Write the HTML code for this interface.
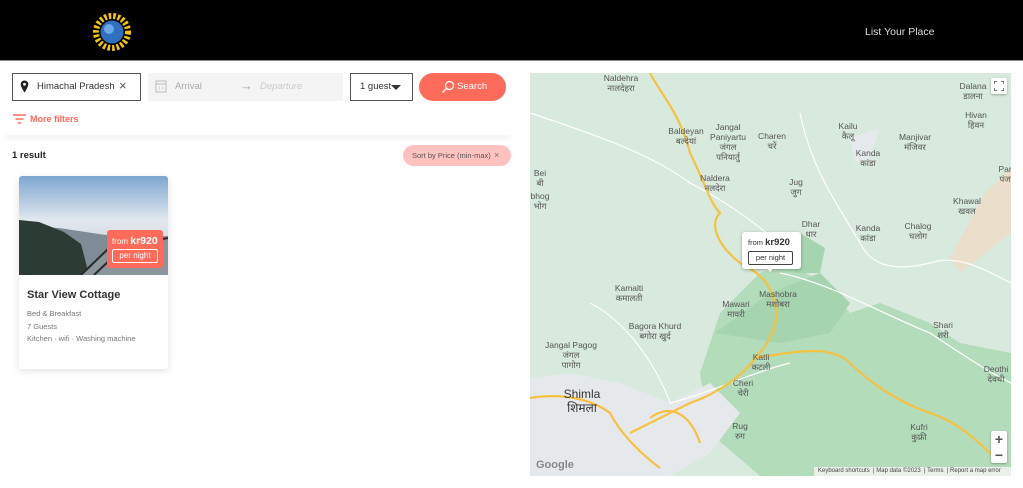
<!DOCTYPE html>
<html><head><meta charset="utf-8"><style>
*{box-sizing:border-box;margin:0;padding:0}
body{width:1023px;height:488px;overflow:hidden;background:#fff;font-family:"Liberation Sans",sans-serif;position:relative}
.abs{position:absolute}
.hdr{left:0;top:0;width:1023px;height:61px;background:#000;border-bottom:1px solid #888}
.lab{position:absolute;font-size:8.5px;color:#555;text-align:center;line-height:10px;transform:translateX(-50%);white-space:nowrap;font-family:"Liberation Sans","Noto Sans CJK SC",sans-serif}
</style></head><body>
<div class="abs hdr">
 <svg class="abs" style="left:92px;top:13px" width="40" height="38" viewBox="0 0 40 38">
  <circle cx="20" cy="19" r="16" fill="none" stroke="#f5c800" stroke-width="6" stroke-dasharray="2.5 2"/>
  <circle cx="20" cy="19" r="11.5" fill="#2e6fc0"/>
  <circle cx="17" cy="16" r="5" fill="#6aa8e8"/>
 </svg>
 <div class="abs" style="left:865px;top:26px;color:#ddd;font-size:10.5px">List Your Place</div>
</div>
<div class="abs" style="left:12px;top:73px;width:129px;height:28px;border:1px solid #555;"></div>
<svg class="abs" style="left:20px;top:80px" width="9" height="13" viewBox="0 0 9 13"><path d="M4.5 0.5C2.3 0.5 0.7 2.1 0.7 4.3 0.7 7.2 4.5 12.5 4.5 12.5S8.3 7.2 8.3 4.3C8.3 2.1 6.7 0.5 4.5 0.5Z" fill="#222"/><circle cx="4.5" cy="4.3" r="1.4" fill="#fff"/></svg>
<div class="abs" style="left:37px;top:81px;font-size:9.5px;color:#333">Himachal Pradesh</div>
<div class="abs" style="left:119px;top:78px;font-size:13px;color:#555">×</div>
<div class="abs" style="left:148px;top:73px;width:195px;height:28px;background:#f4f4f4"></div>
<svg class="abs" style="left:155px;top:79px" width="12" height="14"><rect x="1" y="2" width="10" height="11" fill="none" stroke="#bbb"/><path d="M1 5H11M4 8H5M7 8H8M4 10H5M7 10H8" stroke="#bbb"/></svg>
<div class="abs" style="left:175px;top:81px;font-size:9.5px;color:#aaa">Arrival</div>
<div class="abs" style="left:240px;top:78px;font-size:13px;color:#aaa">→</div>
<div class="abs" style="left:260px;top:81px;font-size:9.5px;color:#ccc;font-style:italic">Departure</div>
<div class="abs" style="left:350px;top:73px;width:63px;height:28px;border:1px solid #555"></div>
<div class="abs" style="left:360px;top:81px;font-size:9.5px;color:#333">1 guest</div>
<div class="abs" style="left:391px;top:85px;width:0;height:0;border-left:5px solid transparent;border-right:5px solid transparent;border-top:5px solid #333"></div>
<div class="abs" style="left:419px;top:73px;width:87px;height:28px;background:#ff6b5b;border-radius:14px"></div>
<svg class="abs" style="left:441px;top:80px" width="14" height="14"><circle cx="8.5" cy="5.5" r="4" fill="none" stroke="#fff" stroke-width="1.2"/><path d="M5.5 8.5L1.5 12.5" stroke="#fff" stroke-width="1.4"/></svg>
<div class="abs" style="left:457px;top:81px;font-size:9.5px;color:#fff">Search</div>
<svg class="abs" style="left:13px;top:114px" width="13" height="10"><path d="M0 1H13M2.5 5H10.5M5 9H8" stroke="#ff6b5b" stroke-width="1.4"/></svg>
<div class="abs" style="left:30px;top:114px;font-size:9px;color:#ff6b5b;font-weight:bold">More filters</div>
<div class="abs" style="left:5px;top:131px;width:505px;height:4px;box-shadow:0 3px 5px rgba(0,0,0,0.07)"></div>
<div class="abs" style="left:12px;top:150px;font-size:9.5px;color:#222;font-weight:bold">1 result</div>
<div class="abs" style="left:403px;top:145px;width:108px;height:21px;background:#ffc2be;border-radius:11px"></div>
<div class="abs" style="left:412px;top:151px;font-size:7.5px;color:#555">Sort by Price (min-max)</div>
<div class="abs" style="left:494px;top:150px;font-size:9px;color:#777">×</div>
<div class="abs" style="left:19px;top:176px;width:149px;height:193px;background:#fff;border-radius:3px;box-shadow:0 2px 8px rgba(0,0,0,0.12);overflow:hidden">
 <svg width="149" height="99" viewBox="0 0 149 99">
  <defs><linearGradient id="sk" x1="0" y1="0" x2="0" y2="1"><stop offset="0" stop-color="#7da6d0"/><stop offset="0.45" stop-color="#e3e8ee"/><stop offset="1" stop-color="#b8c4cf"/></linearGradient></defs>
  <rect width="149" height="99" fill="url(#sk)"/>
  <path d="M0 50 L40 52 L80 58 L110 62 L149 60 L149 99 L0 99Z" fill="#7e8c98"/>
  <path d="M0 44 L20 46 L45 56 L62 68 L70 99 L0 99Z" fill="#2c3b33"/>
  <path d="M62 99 L90 74 L149 64 L149 99Z" fill="#8a959c"/>
  <path d="M62 99 L90 72 L149 62 M75 99 L95 80" stroke="#2a2a2a" stroke-width="2" fill="none"/>
 </svg>
 <div class="abs" style="left:88px;top:54px;width:56px;height:38px;background:#ff6b5b;border-radius:3px"></div>
 <div class="abs" style="left:93px;top:59px;font-size:8px;color:#fff">from <b style="font-size:10.5px">kr920</b></div>
 <div class="abs" style="left:93px;top:73px;width:46px;height:14px;border:1px solid #fff;border-radius:2px;font-size:8px;color:#fff;text-align:center;line-height:12px">per night</div>
 <div class="abs" style="left:8px;top:113px;font-size:11px;font-weight:bold;color:#333">Star View Cottage</div>
 <div class="abs" style="left:8px;top:132px;font-size:7.5px;color:#777;line-height:12.5px">Bed &amp; Breakfast<br>7 Guests<br>Kitchen · wifi · Washing machine</div>
</div>
<div class="abs" style="left:530px;top:73px;width:481px;height:403px;background:#d8e9dd;overflow:hidden">
 <svg class="abs" style="left:0;top:0" width="481" height="403" viewBox="0 0 481 403">
  <path d="M190 240 L230 200 L260 190 L300 215 L320 240 L350 230 L400 250 L430 270 L481 280 L481 403 L230 403 L180 360 L170 300 Z" fill="#b3dcbb"/>
  <path d="M185 260 L240 220 L290 200 L320 230 L300 260 L250 270 Z" fill="#a5d4ae"/>
  <path d="M270 160 L295 175 L290 200 L265 200Z" fill="#a5d4ae"/>
  <path d="M0 305 L40 300 L90 310 L140 330 L180 310 L210 340 L180 380 L140 403 L0 403Z" fill="#e6e9ec"/>
  <path d="M455 120 L481 95 L481 160 L430 200 L420 185Z" fill="#eadfcb"/>
  <path d="M320 65 L350 55 L340 85 L325 90Z" fill="#e6e9ec"/>
  <g fill="none" stroke="#fff" stroke-width="1.2">
   <path d="M0 40 C60 60 120 80 160 110 C200 130 240 160 270 190"/>
   <path d="M270 40 C280 90 300 120 330 170 C340 190 360 200 400 190 C430 180 460 200 481 210"/>
   <path d="M250 200 C300 210 350 240 400 260 C430 280 460 300 481 310"/>
   <path d="M60 230 C100 250 130 300 140 330 C180 320 220 300 260 290"/>
  </g>
  <g fill="none" stroke="#f5c240" stroke-width="2.2">
   <path d="M120 0 C130 20 150 40 160 80 C175 110 180 130 190 140 C180 150 185 170 210 190 C230 200 240 210 245 230 C250 250 240 270 225 285 C215 300 190 320 160 330 C140 340 120 350 100 360"/>
   <path d="M225 285 C260 280 300 270 320 290 C340 310 370 330 400 340 C430 350 450 370 470 390"/>
   <path d="M0 325 C30 320 60 325 80 340 C90 360 110 380 130 395 M120 345 C140 330 160 340 170 370"/>
  </g>
 </svg>
 <div class="lab" style="left:91px;top:0px">Naldehra<br>नालदेहरा</div>
 <div class="lab" style="left:156px;top:53px">Baldeyan<br>बल्देयां</div>
 <div class="lab" style="left:198px;top:49px">Jangal<br>Paniyartu<br>जंगल<br>पनियार्तु</div>
 <div class="lab" style="left:242px;top:58px">Charen<br>चरें</div>
 <div class="lab" style="left:318px;top:48px">Kailu<br>कैलू</div>
 <div class="lab" style="left:385px;top:59px">Manjivar<br>मंजिवर</div>
 <div class="lab" style="left:446px;top:37px">Hivan<br>हिवन</div>
 <div class="lab" style="left:443px;top:8px">Dalana<br>डालना</div>
 <div class="lab" style="left:338px;top:75px">Kanda<br>कांडा</div>
 <div class="lab" style="left:10px;top:95px">Bei<br>बी</div>
 <div class="lab" style="left:10px;top:118px">bhog<br>भोग</div>
 <div class="lab" style="left:185px;top:100px">Naldera<br>नलदेरा</div>
 <div class="lab" style="left:266px;top:104px">Jug<br>जुग</div>
 <div class="lab" style="left:437px;top:123px">Khawal<br>खवल</div>
 <div class="lab" style="left:281px;top:146px">Dhar<br>धार</div>
 <div class="lab" style="left:338px;top:150px">Kanda<br>कांडा</div>
 <div class="lab" style="left:388px;top:148px">Chalog<br>चलोग</div>
 <div class="lab" style="left:476px;top:91px">Pan<br>पंजा</div>
 <div class="lab" style="left:99px;top:210px">Kamalti<br>कमालती</div>
 <div class="lab" style="left:248px;top:216px">Mashobra<br>मशोबरा</div>
 <div class="lab" style="left:206px;top:226px">Mawari<br>मावरी</div>
 <div class="lab" style="left:125px;top:248px">Bagora Khurd<br>बगोरा खुर्द</div>
 <div class="lab" style="left:413px;top:247px">Shari<br>शरी</div>
 <div class="lab" style="left:41px;top:267px">Jangal Pagog<br>जंगल<br>पागोग</div>
 <div class="lab" style="left:231px;top:279px">Katli<br>कटली</div>
 <div class="lab" style="left:466px;top:291px">Deothi<br>देवथी</div>
 <div class="lab" style="left:213px;top:305px">Cheri<br>चेरी</div>
 <div class="lab" style="left:52px;top:314px;font-size:12px;line-height:14px;color:#333">Shimla<br>शिमला</div>
 <div class="lab" style="left:210px;top:348px">Rug<br>रुग</div>
 <div class="lab" style="left:389px;top:349px">Kufri<br>कुफ्री</div>
 <div class="abs" style="left:6px;top:386px;font-size:11px;color:#888;font-weight:bold">Google</div>
 <div class="abs" style="left:284px;top:394px;width:197px;height:9px;background:rgba(245,245,245,0.8);font-size:6px;color:#444;line-height:9px;padding-left:4px;white-space:nowrap">Keyboard shortcuts &nbsp;| Map data ©2023 &nbsp;| Terms &nbsp;| Report a map error</div>
 <div class="abs" style="left:461px;top:5px;width:16px;height:16px;background:#fff;border-radius:2px;box-shadow:0 1px 2px rgba(0,0,0,.3)"></div>
 <svg class="abs" style="left:464px;top:8px" width="10" height="10"><path d="M0 3V0H3M7 0H10V3M10 7V10H7M3 10H0V7" fill="none" stroke="#555" stroke-width="1.5"/></svg>
 <div class="abs" style="left:461px;top:358px;width:16px;height:32px;background:#fff;border-radius:2px;box-shadow:0 1px 2px rgba(0,0,0,.3);font-size:14px;color:#555;text-align:center;line-height:16px;font-weight:bold">+<br>−</div>
 <div class="abs" style="left:212px;top:159px;width:59px;height:37px;background:#fff;border-radius:3px;box-shadow:0 1px 3px rgba(0,0,0,.3)"></div>
 <div class="abs" style="left:236px;top:194px;width:0;height:0;border-left:4px solid transparent;border-right:4px solid transparent;border-top:5px solid #fff"></div>
 <div class="abs" style="left:218px;top:164px;font-size:7.5px;color:#333">from <b style="font-size:9.5px">kr920</b></div>
 <div class="abs" style="left:218px;top:178px;width:45px;height:14px;border:1px solid #444;border-radius:2px;font-size:7.5px;color:#333;text-align:center;line-height:12px">per night</div>
</div>
</body></html>
